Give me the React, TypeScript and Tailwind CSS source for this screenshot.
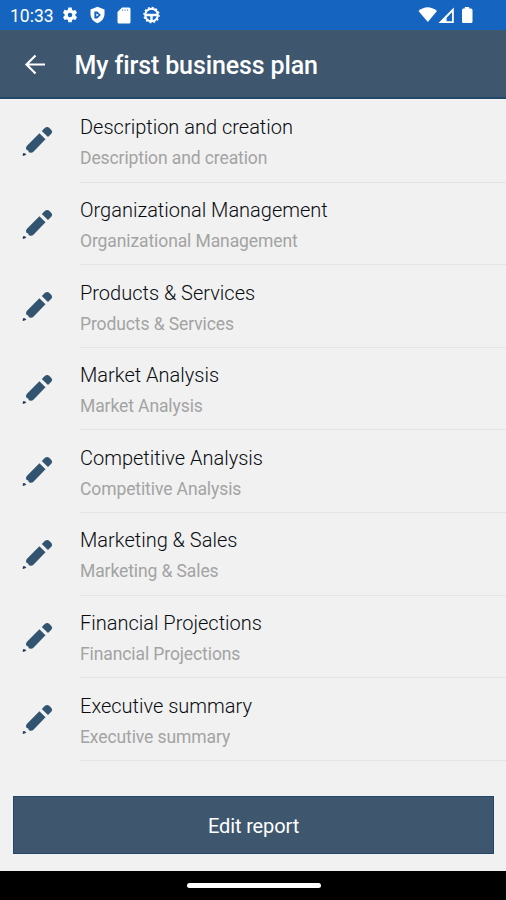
const sections = [
  "Description and creation",
  "Organizational Management",
  "Products & Services",
  "Market Analysis",
  "Competitive Analysis",
  "Marketing & Sales",
  "Financial Projections",
  "Executive summary",
]

function PencilIcon() {
  return (
    <svg width="32" height="32" viewBox="0 0 32 32" fill="#335470">
      <path d="M1.3 27 Q3.2 26.6 4.4 28.8 L1.2 30 Q.4 29.8 .7 28.8 Z" fill="#2c3f5c" />
      <path d="M17.4 7.2 L23.5 13.2 L11.2 26 Q10 27 8.6 26.7 L6.8 26.2 L6.2 24.5 L4.4 23.8 L4 22.1 Q4 20.9 5 19.8 Z" />
      <path d="M19.8 5.1 L23 1.8 Q25.2 .1 27.2 1.7 L29.4 3.9 Q31 5.8 29.3 7.8 L26 11.1 Z" />
    </svg>
  )
}

function StatusBar() {
  return (
    <div className="h-[30px] bg-[#1565c0] flex items-center text-white shrink-0">
      <span className="ml-[10px] w-[44px] text-[17.5px] leading-[30px] whitespace-nowrap pt-[2px]">10:33</span>
      <svg className="ml-[7px]" width="18" height="18" viewBox="0 0 24 24" fill="white">
        <path d="M19.14 12.94c.04-.3.06-.61.06-.94s-.02-.64-.07-.94l2.03-1.58a.49.49 0 0 0 .12-.61l-1.92-3.32a.49.49 0 0 0-.59-.22l-2.39.96a7 7 0 0 0-1.62-.94l-.36-2.54A.48.48 0 0 0 13.92 2h-3.84a.47.47 0 0 0-.47.41l-.36 2.54c-.59.24-1.13.57-1.62.94l-2.39-.96a.49.49 0 0 0-.59.22L2.74 8.87a.47.47 0 0 0 .12.61l2.03 1.58a8 8 0 0 0 0 1.88l-2.03 1.58a.49.49 0 0 0-.12.61l1.92 3.32c.12.22.37.29.59.22l2.39-.96c.5.38 1.03.7 1.62.94l.36 2.54c.05.24.24.41.48.41h3.84c.24 0 .44-.17.47-.41l.36-2.54a7 7 0 0 0 1.62-.94l2.39.96c.22.08.47 0 .59-.22l1.92-3.32a.47.47 0 0 0-.12-.61l-2.01-1.58zM12 15a3 3 0 1 1 0-6 3 3 0 0 1 0 6z" />
      </svg>
      <svg className="ml-[9px]" width="19" height="18" viewBox="0 0 19 18">
        <path d="M9.5 .8 L16.5 3.4 V8.3 Q16.3 14.4 9.5 17.2 Q2.7 14.4 2.5 8.3 V3.4 Z" fill="white" />
        <path d="M6.4 5.6 H9.3 L12.8 9 L9.3 12.4 H6.4 Z" fill="#1565c0" />
        <path d="M8.3 7.4 L10.8 9 L8.3 10.6 Z" fill="white" />
      </svg>
      <svg className="ml-[10px]" width="14" height="17" viewBox="0 0 14 17">
        <path d="M5 .5 H12 Q13.5 .5 13.5 2 V15 Q13.5 16.5 12 16.5 H2 Q.5 16.5 .5 15 V5 Z" fill="white" />
        <path d="M5.6 2.3 V4 M8.1 2.3 V4 M10.6 2.3 V4" stroke="#1565c0" strokeWidth="1" opacity=".6" />
      </svg>
      <svg className="ml-[11px]" width="19" height="18" viewBox="0 0 19 18" fill="none" stroke="white">
        <circle cx="9.5" cy="9" r="6.3" strokeWidth="2" />
        <circle cx="9.5" cy="9" r="7.6" strokeWidth="1.3" strokeDasharray="2 1.98" />
        <path d="M3.5 9 H15.5 M9.5 9 V15" strokeWidth="2.4" />
      </svg>
      <svg className="ml-auto mr-[31px]" width="57" height="18" viewBox="0 0 57 18" fill="white">
        <path d="M.5 5 Q9.5 -2.5 19 5 L9.8 16 Z" />
        <path d="M20.5 17 L35.8 1.5 V17 Z M28.6 15.3 H34 V6.3 L28.6 11.8 Z" fillRule="evenodd" />
        <path d="M46.8 1 H51.2 V2.6 H53 Q54.5 2.6 54.5 4.2 V15.5 Q54.5 17 53 17 H45.4 Q44 17 44 15.5 V4.2 Q44 2.6 45.4 2.6 H46.8 Z" />
      </svg>
    </div>
  )
}

export default function App() {
  return (
    <div className="w-[506px] h-[900px] bg-[#f1f1f1] flex flex-col overflow-hidden font-['Roboto',sans-serif]">
      <StatusBar />
      <header className="h-[69px] shrink-0 bg-[#3e576f] border-b-2 border-[#234766] flex items-center text-white">
        <svg className="ml-[24px] mt-[2px]" width="22" height="22" viewBox="0 0 22 22" fill="none" stroke="white" strokeWidth="2.2">
          <path d="M21 10.5 H3 M11.5 1.5 L2.5 10.5 L11.5 19.5" />
        </svg>
        <h1 className="ml-[28.5px] pt-[5px] text-[25px] leading-[30px] tracking-[-0.12px] font-medium whitespace-nowrap">
          My first business plan
        </h1>
      </header>

      <ul className="pt-[1px] shrink-0">
        {sections.map((title) => (
          <li key={title} className="h-[82.6px] flex">
            <div className="w-[80px] pl-[22px] pt-[26px]">
              <PencilIcon />
            </div>
            <div className="flex-1 border-b border-[#e4e4e4] pt-[15.4px] whitespace-nowrap">
              <div className="text-[20px] leading-[24px] text-[#080c10] font-light">{title}</div>
              <div className="mt-[8px] text-[17.5px] leading-[22px] tracking-[-0.1px] text-[#a3a3a3]">{title}</div>
            </div>
          </li>
        ))}
      </ul>

      <button className="mt-auto mb-[17px] ml-[13px] mr-[12px] h-[58px] shrink-0 bg-[#3e576f] border border-[#234766] text-white text-[20px] leading-[24px] tracking-[-0.12px] pt-[2px]">
        Edit report
      </button>
      <div className="h-[29px] shrink-0 bg-black flex justify-center pt-[12px]">
        <div className="ml-px w-[134px] h-[5px] rounded-full bg-white" />
      </div>
    </div>
  )
}
